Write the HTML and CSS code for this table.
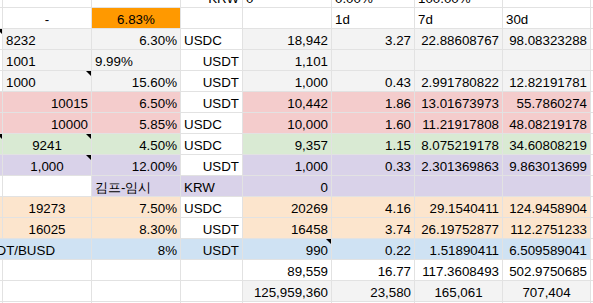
FILE: index.html
```html
<!DOCTYPE html>
<html>
<head>
<meta charset="utf-8">
<link rel="stylesheet" href="styles.css">
</head>
<body>
<div class="sheet">
  <!-- row 0 (partially visible) -->
  <div class="c"></div><div class="c"></div><div class="c"></div><div class="c r">KRW</div><div class="c">0</div><div class="c">0.00%</div><div class="c">100.00%</div><div class="c"></div><div class="c"></div>
  <!-- row 1 -->
  <div class="c"></div><div class="c m">-</div><div class="c m og">6.83%</div><div class="c"></div><div class="c"></div><div class="c">1d</div><div class="c">7d</div><div class="c">30d</div><div class="c"></div>
  <!-- row 2 -->
  <div class="c note"></div><div class="c gy">8232</div><div class="c r gy">6.30%</div><div class="c">USDC</div><div class="c r gy">18,942</div><div class="c r gy">3.27</div><div class="c r gy">22.88608767</div><div class="c r gy">98.08323288</div><div class="c"></div>
  <!-- row 3 -->
  <div class="c"></div><div class="c gy">1001</div><div class="c gy">9.99%</div><div class="c r">USDT</div><div class="c r gy">1,101</div><div class="c gy"></div><div class="c gy"></div><div class="c gy"></div><div class="c"></div>
  <!-- row 4 -->
  <div class="c"></div><div class="c gy note">1000</div><div class="c r gy">15.60%</div><div class="c r">USDT</div><div class="c r gy">1,000</div><div class="c r gy">0.43</div><div class="c r gy">2.991780822</div><div class="c r gy">12.82191781</div><div class="c"></div>
  <!-- row 5 -->
  <div class="c pk"></div><div class="c r pk">10015</div><div class="c r pk">6.50%</div><div class="c r">USDT</div><div class="c r pk">10,442</div><div class="c r pk">1.86</div><div class="c r pk">13.01673973</div><div class="c r pk">55.7860274</div><div class="c"></div>
  <!-- row 6 -->
  <div class="c pk"></div><div class="c r pk">10000</div><div class="c r pk">5.85%</div><div class="c">USDC</div><div class="c r pk">10,000</div><div class="c r pk">1.60</div><div class="c r pk">11.21917808</div><div class="c r pk">48.08219178</div><div class="c"></div>
  <!-- row 7 -->
  <div class="c gn note"></div><div class="c m gn note">9241</div><div class="c r gn">4.50%</div><div class="c">USDC</div><div class="c r gn">9,357</div><div class="c r gn">1.15</div><div class="c r gn">8.075219178</div><div class="c r gn">34.60808219</div><div class="c"></div>
  <!-- row 8 -->
  <div class="c pu"></div><div class="c m pu note">1,000</div><div class="c r pu">12.00%</div><div class="c r">USDT</div><div class="c r pu">1,000</div><div class="c r pu">0.33</div><div class="c r pu">2.301369863</div><div class="c r pu">9.863013699</div><div class="c"></div>
  <!-- row 9 -->
  <div class="c"></div><div class="c"></div><div class="c pu">김프-임시</div><div class="c pu">KRW</div><div class="c r pu">0</div><div class="c pu"></div><div class="c pu"></div><div class="c pu"></div><div class="c"></div>
  <!-- row 10 -->
  <div class="c or"></div><div class="c m or">19273</div><div class="c r or">7.50%</div><div class="c">USDC</div><div class="c r or">20269</div><div class="c r or">4.16</div><div class="c r or">29.1540411</div><div class="c r or">124.9458904</div><div class="c"></div>
  <!-- row 11 -->
  <div class="c or"></div><div class="c m or">16025</div><div class="c r or">8.30%</div><div class="c r">USDT</div><div class="c r or">16458</div><div class="c r or">3.74</div><div class="c r or">26.19752877</div><div class="c r or">112.2751233</div><div class="c"></div>
  <!-- row 12 -->
  <div class="c bl span2">USDT/BUSD</div><div class="c r bl">8%</div><div class="c r bl">USDT</div><div class="c r bl note">990</div><div class="c r bl">0.22</div><div class="c r bl">1.51890411</div><div class="c r bl">6.509589041</div><div class="c"></div>
  <!-- row 13 -->
  <div class="c"></div><div class="c"></div><div class="c"></div><div class="c"></div><div class="c r">89,559</div><div class="c r">16.77</div><div class="c r">117.3608493</div><div class="c r">502.9750685</div><div class="c"></div>
  <!-- row 14 -->
  <div class="c"></div><div class="c"></div><div class="c"></div><div class="c"></div><div class="c r gy">125,959,360</div><div class="c r gy">23,580</div><div class="c m gy">165,061</div><div class="c m gy">707,404</div><div class="c"></div>
  <!-- row 15 -->
  <div class="c"></div><div class="c"></div><div class="c"></div><div class="c"></div><div class="c"></div><div class="c"></div><div class="c"></div><div class="c"></div><div class="c"></div>
</div>
</body>
</html>
```
FILE: styles.css
```css
html, body {
  margin: 0;
  padding: 0;
  background: #ffffff;
  overflow: hidden;
}

.sheet {
  display: grid;
  grid-template-columns: 28px 89px 89px 62px 89px 83px 88px 88px 40px;
  grid-auto-rows: 21px;
  margin-left: -25px;
  margin-top: -13px;
  font-family: "Liberation Sans", Arial, sans-serif;
  font-size: 13.33px;
  color: #000000;
}

.c {
  position: relative;
  box-sizing: border-box;
  border-right: 1px solid #e2e2e2;
  border-bottom: 1px solid #e2e2e2;
  padding: 0 3px 1px 3px;
  display: flex;
  align-items: flex-end;
  justify-content: flex-start;
  white-space: nowrap;
  overflow: hidden;
  line-height: 15px;
}

.r { justify-content: flex-end; }
.m { justify-content: center; }

.span2 { grid-column: span 2; }

.gy { background: #f3f3f3; }
.pk { background: #f4cccc; }
.gn { background: #d9ead3; }
.pu { background: #d9d2e9; }
.or { background: #fce5cd; }
.bl { background: #cfe2f3; }
.og { background: #ff9900; }

.note::after {
  content: "";
  position: absolute;
  top: 0;
  right: 0;
  width: 0;
  height: 0;
  border-top: 5px solid #000000;
  border-left: 5px solid transparent;
}
```
